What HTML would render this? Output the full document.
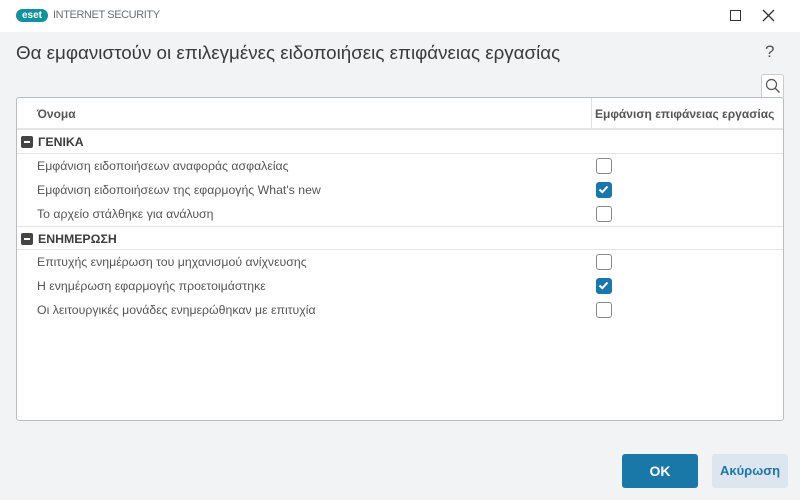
<!DOCTYPE html>
<html><head><meta charset="utf-8"><style>
*{margin:0;padding:0;box-sizing:border-box}
body{width:800px;height:500px;background:#f2f3f5;font-family:"Liberation Sans","DejaVu Sans",sans-serif;position:relative;overflow:hidden;color:#3c3c3c}
.tb{position:absolute;left:0;top:0;width:800px;height:32px;background:#fff}
.abs{position:absolute}
.box{position:absolute;left:16px;top:97px;width:768px;height:324px;background:#fff;border:1px solid #b9bcc0;border-radius:3px}
.row{position:absolute;left:0;width:766px;height:24px;font-size:12.3px;color:#555;line-height:24px}
.cb{position:absolute;left:579px;top:4px;width:16px;height:16px;border:1.5px solid #888;border-radius:3px;background:#fff}
.cb.on{background:#1a77ad;border-color:#1a77ad}
.grp{font-weight:bold;color:#3c3c3c;border-bottom:1px solid #e3e3e3}
.minus{position:absolute;left:4px;top:6px;width:12px;height:12px;background:#444;border-radius:2px}
.minus:after{content:"";position:absolute;left:3px;top:5px;width:6px;height:2px;background:#fff}
</style></head><body>
<div class="tb">
<div class="abs" style="left:16px;top:9px;width:32px;height:13px;background:#11909e;border-radius:7px;color:#fff;font-size:10px;font-weight:bold;line-height:13px;text-align:center">eset</div>
<div class="abs" style="left:53px;top:9px;font-size:11px;color:#6a6e72;letter-spacing:-0.4px">INTERNET SECURITY</div>
<div class="abs" style="left:730px;top:10px;width:11px;height:11px;border:1.3px solid #333"></div>
<svg class="abs" style="left:762px;top:9px" width="13" height="13"><path d="M1 1L12 12M12 1L1 12" stroke="#333" stroke-width="1.3"/></svg>
</div>
<div class="abs" style="left:16px;top:42px;font-size:18.8px;color:#3a3a3a">Θα εμφανιστούν οι επιλεγμένες ειδοποιήσεις επιφάνειας εργασίας</div>
<div class="abs" style="left:765px;top:42px;font-size:17px;color:#555">?</div>
<div class="abs" style="left:761px;top:74px;width:23px;height:24px;background:#fff;border:1px solid #ccc;border-bottom:none;border-radius:3px 3px 0 0"></div>
<svg class="abs" style="left:765px;top:78px" width="16" height="16"><circle cx="6.5" cy="6.5" r="5" fill="none" stroke="#555" stroke-width="1.2"/><path d="M10 10L14.5 14.5" stroke="#555" stroke-width="1.3"/></svg>
<div class="box">
<div class="row" style="top:0;height:32px;line-height:32px;border-bottom:2px solid #e4e4e4;font-weight:bold;color:#555;font-size:12px">
<span style="position:absolute;left:20px">Όνομα</span>
<div style="position:absolute;left:574px;top:0;width:1px;height:30px;background:#e0e0e0"></div>
<span style="position:absolute;left:578px">Εμφάνιση επιφάνειας εργασίας</span></div>
<div class="row grp" style="top:32px"><div class="minus"></div><span style="position:absolute;left:21px">ΓΕΝΙΚΑ</span></div>
<div class="row" style="top:56px"><span style="position:absolute;left:20px">Εμφάνιση ειδοποιήσεων αναφοράς ασφαλείας</span><div class="cb"></div></div>
<div class="row" style="top:80px"><span style="position:absolute;left:20px">Εμφάνιση ειδοποιήσεων της εφαρμογής What's new</span><div class="cb on"><svg width="13" height="13" style="position:absolute;left:0;top:0"><path d="M2.5 6.5L5.3 9.2L10.5 3.5" fill="none" stroke="#fff" stroke-width="2"/></svg></div></div>
<div class="row" style="top:104px"><span style="position:absolute;left:20px">Το αρχείο στάλθηκε για ανάλυση</span><div class="cb"></div></div>
<div class="row grp" style="top:128px;border-top:1px solid #e3e3e3"><div class="minus"></div><span style="position:absolute;left:21px">ΕΝΗΜΕΡΩΣΗ</span></div>
<div class="row" style="top:152px"><span style="position:absolute;left:20px">Επιτυχής ενημέρωση του μηχανισμού ανίχνευσης</span><div class="cb"></div></div>
<div class="row" style="top:176px"><span style="position:absolute;left:20px">Η ενημέρωση εφαρμογής προετοιμάστηκε</span><div class="cb on"><svg width="13" height="13" style="position:absolute;left:0;top:0"><path d="M2.5 6.5L5.3 9.2L10.5 3.5" fill="none" stroke="#fff" stroke-width="2"/></svg></div></div>
<div class="row" style="top:200px"><span style="position:absolute;left:20px">Οι λειτουργικές μονάδες ενημερώθηκαν με επιτυχία</span><div class="cb"></div></div>
</div>
<div class="abs" style="left:622px;top:454px;width:76px;height:34px;background:#1a78a9;border-radius:3px;color:#fff;font-weight:bold;font-size:14px;text-align:center;line-height:34px">OK</div>
<div class="abs" style="left:712px;top:454px;width:76px;height:34px;background:#dde6ee;border-radius:3px;color:#1a78a9;font-weight:bold;font-size:13px;text-align:center;line-height:34px">Ακύρωση</div>
</body></html>
